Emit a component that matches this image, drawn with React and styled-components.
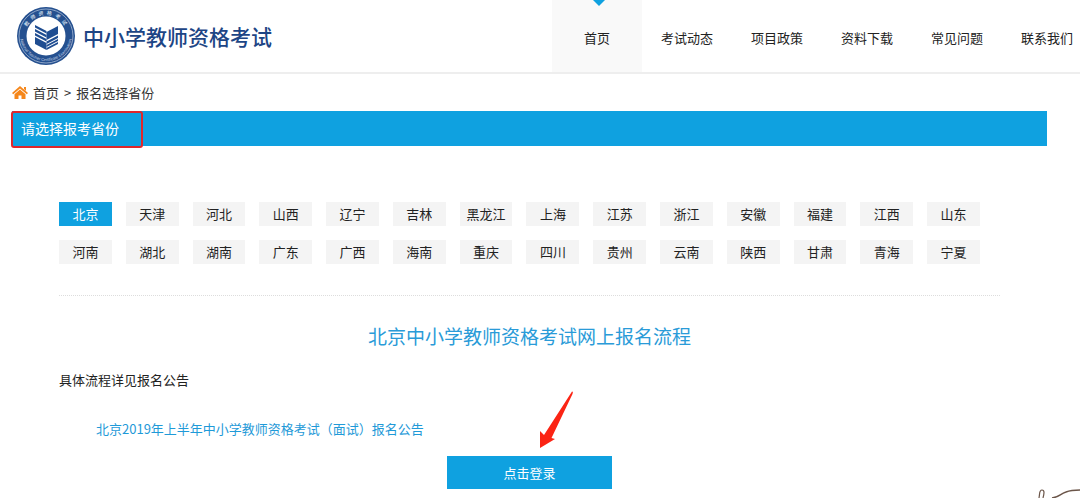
import React from "react";
import styled, { createGlobalStyle } from "styled-components";

const GlobalStyle = createGlobalStyle`
  * { box-sizing: border-box; }
  body {
    margin: 0;
    background: #fff;
    color: #222;
    font: 13px/20px "Noto Sans CJK SC", sans-serif;
    overflow-x: hidden;
  }
  button { font: inherit; border: 0; padding: 0; cursor: pointer; }
  a { color: inherit; text-decoration: none; }
  h1, h2, p { margin: 0; font-weight: 400; }
`;

const BLUE = "#0fa1e0";

const Page = styled.div`
  position: relative;
  overflow: hidden;
`;

const Header = styled.header`
  display: flex;
  height: 74px;
  border-bottom: 2px solid #eee;
`;

const Brand = styled.a`
  display: flex;
  align-items: center;
  gap: 7px;
  padding-left: 16px;
  color: #1d4585;
  font-size: 21px;
  line-height: 32px;
  font-weight: 500;
  white-space: nowrap;
`;

const Nav = styled.nav`
  display: flex;
  margin: 0 -12px 0 auto;
`;

const NavItem = styled.a`
  position: relative;
  display: flex;
  align-items: center;
  justify-content: center;
  width: 90px;
  padding-top: 4px;
  white-space: nowrap;
  background: ${(p) => (p.$active ? "#f9f9f9" : "transparent")};
`;

const Pointer = styled.svg`
  position: absolute;
  top: 0;
  left: 50%;
  margin-left: -5px;
`;

const Main = styled.main`
  padding: 0 33px 0 12px;
`;

const Breadcrumb = styled.nav`
  display: flex;
  align-items: center;
  gap: 5px;
  height: 37px;
  color: #333;
`;

const Banner = styled.div`
  position: relative;
  height: 35px;
  padding-left: 9px;
  background: ${BLUE};
  color: #fff;
`;

const BannerTitle = styled.h1`
  font-size: 14px;
  line-height: 34px;
`;

const Highlight = styled.span`
  position: absolute;
  inset: 0 auto -2px -1px;
  width: 132px;
  border: 2px solid #e0262b;
  border-radius: 3px;
`;

const Content = styled.div`
  padding: 56px 47px 9px;
`;

const Provinces = styled.div`
  display: grid;
  grid-template-columns: repeat(14, 1fr);
  gap: 14px;
  padding: 0 20px 31px 0;
  border-bottom: 1px dotted #ddd;
`;

const Province = styled.button`
  height: 24px;
  line-height: 24px;
  white-space: nowrap;
  color: ${(p) => (p.$active ? "#fff" : "#222")};
  background: ${(p) => (p.$active ? BLUE : "#f4f4f4")};
`;

const Title = styled.h2`
  margin-top: 26px;
  font-size: 19px;
  line-height: 28px;
  text-align: center;
  color: #2a9bd8;
`;

const Note = styled.p`
  margin-top: 20px;
`;

const Notice = styled.a`
  display: block;
  margin: 29px 0 0 37px;
  color: #1f9ad8;
`;

const Action = styled.div`
  position: relative;
  width: 165px;
  margin: 17px auto 0;
`;

const LoginButton = styled.button`
  display: block;
  width: 100%;
  height: 33px;
  color: #fff;
  background: ${BLUE};
`;

const Arrow = styled.svg`
  position: absolute;
  left: 91px;
  bottom: 40px;
`;

const Sketch = styled.svg`
  position: absolute;
  right: 0;
  bottom: 0;
`;

const navItems = ["首页", "考试动态", "项目政策", "资料下载", "常见问题", "联系我们"];

const provinces = [
  "北京", "天津", "河北", "山西", "辽宁", "吉林", "黑龙江",
  "上海", "江苏", "浙江", "安徽", "福建", "江西", "山东",
  "河南", "湖北", "湖南", "广东", "广西", "海南", "重庆",
  "四川", "贵州", "云南", "陕西", "甘肃", "青海", "宁夏",
];

function Emblem() {
  return (
    <svg width="60" height="60" viewBox="0 0 60 60" aria-hidden="true">
      <defs>
        <path id="ringTop" d="M9 30a21 21 0 0 1 42 0" />
        <path id="ringBottom" d="M4 29a26 26 0 0 0 52 0" />
      </defs>
      <circle cx="30" cy="30" r="29" fill="#25508f" />
      <circle cx="30" cy="30" r="27" fill="none" stroke="#b9c9df" strokeWidth="0.7" />
      <circle cx="30" cy="30" r="19.5" fill="#fff" />
      <text fill="#dce6f2" fontSize="5" letterSpacing="3">
        <textPath href="#ringTop" startOffset="51%" textAnchor="middle">教师资格考试</textPath>
      </text>
      <text fill="#c3d1e5" fontSize="4" fontFamily="Liberation Sans, sans-serif">
        <textPath href="#ringBottom" startOffset="50%" textAnchor="middle">National Teacher Certificate Examination</textPath>
      </text>
      <g fill="#1f4d91">
        <path d="M19 19l11.500 6v2.500L19 21.500zM19 23l11.500 6v2.500L19 25.500zM19 27l11.500 6v2.500L19 29.500z" />
        <path d="M19 31l11.500 6v7L19 38z" />
        <path d="M30.500 26L42 20v8l-11.500 6z" />
        <path d="M30.500 35.500L42 29.500v2.500l-11.500 6zM30.500 39L42 33v2l-11.500 6zM30.500 42L42 36v2l-11.500 6z" />
      </g>
    </svg>
  );
}

function HomeIcon() {
  return (
    <svg width="16" height="14" viewBox="0 0 16 14" aria-hidden="true">
      <path d="M8 0l8 7-1.200 1.300L8 2.500 1.200 8.300 0 7z" fill="#f5861a" />
      <path d="M2.500 8.200L8 3.500l5.500 4.700V13H9.500V9.500h-3V13h-4z" fill="#f5861a" />
      <path d="M12 1h2v4l-2-2z" fill="#f5861a" />
    </svg>
  );
}

export default function App() {
  return (
    <Page>
      <GlobalStyle />
      <Header>
        <Brand href="#">
          <Emblem />
          <span>中小学教师资格考试</span>
        </Brand>
        <Nav>
          {navItems.map((name, i) => (
            <NavItem key={name} href="#" $active={i === 0}>
              {i === 0 && (
                <Pointer width="14" height="6" viewBox="0 0 14 6" aria-hidden="true">
                  <path d="M1 0h12L7 6z" fill={BLUE} />
                </Pointer>
              )}
              {name}
            </NavItem>
          ))}
        </Nav>
      </Header>
      <Main>
        <Breadcrumb>
          <HomeIcon />
          <a href="#">首页</a>
          <span>&gt;</span>
          <span>报名选择省份</span>
        </Breadcrumb>
        <Banner>
          <BannerTitle>请选择报考省份</BannerTitle>
          <Highlight />
        </Banner>
        <Content>
          <Provinces>
            {provinces.map((name, i) => (
              <Province key={name} type="button" $active={i === 0}>{name}</Province>
            ))}
          </Provinces>
          <Title>北京中小学教师资格考试网上报名流程</Title>
          <Note>具体流程详见报名公告</Note>
          <Notice href="#">北京2019年上半年中小学教师资格考试（面试）报名公告</Notice>
          <Action>
            <LoginButton type="button">点击登录</LoginButton>
            <Arrow width="36" height="59" viewBox="0 0 36 59" aria-hidden="true">
              <path d="M34 1.500Q35.500 1 34.500 4L13.500 48l3.500 1L2 58V41l4 4z" fill="#fb2414" />
            </Arrow>
          </Action>
        </Content>
      </Main>
      <Sketch width="44" height="10" viewBox="0 0 44 10" fill="none" stroke="#6b5549" aria-hidden="true">
        <path d="M3 10C4 5 3 2 6 2s2 4 1 8" strokeWidth="1.200" />
        <path d="M16 10c7-1 8-4 14-6 5-2 9-2 14-2" strokeWidth="1.500" />
      </Sketch>
    </Page>
  );
}
